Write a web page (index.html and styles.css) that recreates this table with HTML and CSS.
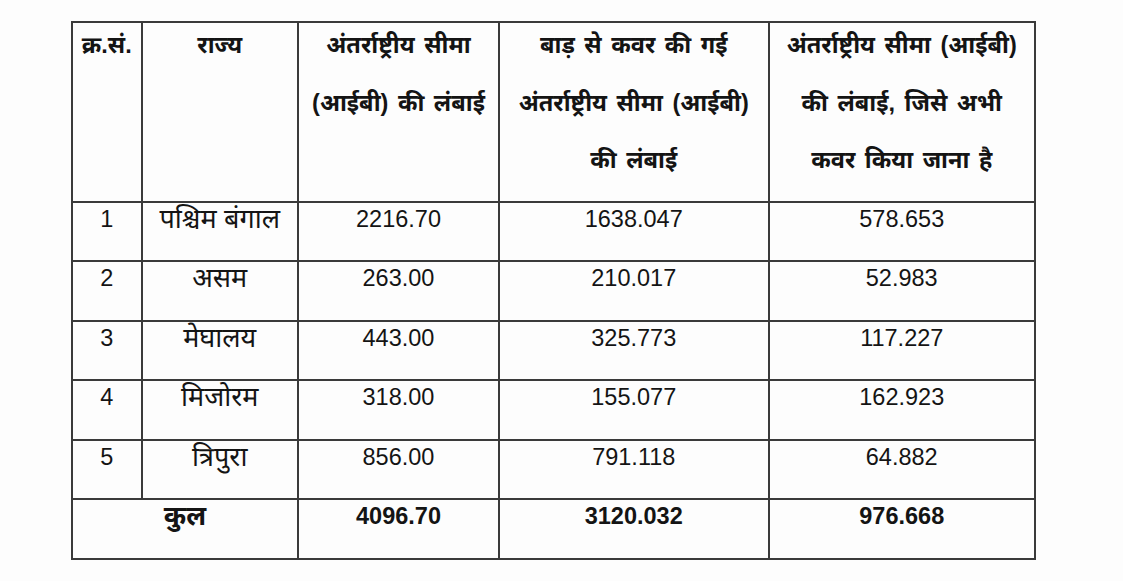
FILE: index.html
```html
<!DOCTYPE html>
<html lang="hi">
<head>
<meta charset="utf-8">
<title>अंतर्राष्ट्रीय सीमा</title>
<link rel="stylesheet" href="styles.css">
</head>
<body>
<table class="grid">
  <colgroup>
    <col class="c1"><col class="c2"><col class="c3"><col class="c4"><col class="c5">
  </colgroup>
  <thead>
    <tr class="head">
      <th><div class="ln">क्र.सं.</div></th>
      <th><div class="ln">राज्य</div></th>
      <th><div class="ln">अंतर्राष्ट्रीय सीमा</div><div class="ln">(आईबी) की लंबाई</div></th>
      <th><div class="ln">बाड़ से कवर की गई</div><div class="ln">अंतर्राष्ट्रीय सीमा (आईबी)</div><div class="ln">की लंबाई</div></th>
      <th><div class="ln">अंतर्राष्ट्रीय सीमा (आईबी)</div><div class="ln">की लंबाई, जिसे अभी</div><div class="ln">कवर किया जाना है</div></th>
    </tr>
  </thead>
  <tbody>
    <tr class="row"><td>1</td><td class="hi">पश्चिम बंगाल</td><td>2216.70</td><td>1638.047</td><td>578.653</td></tr>
    <tr class="row"><td>2</td><td class="hi">असम</td><td>263.00</td><td>210.017</td><td>52.983</td></tr>
    <tr class="row"><td>3</td><td class="hi">मेघालय</td><td>443.00</td><td>325.773</td><td>117.227</td></tr>
    <tr class="row"><td>4</td><td class="hi">मिजोरम</td><td>318.00</td><td>155.077</td><td>162.923</td></tr>
    <tr class="row"><td>5</td><td class="hi">त्रिपुरा</td><td>856.00</td><td>791.118</td><td>64.882</td></tr>
    <tr class="row total"><td colspan="2" class="hi">कुल</td><td>4096.70</td><td>3120.032</td><td>976.668</td></tr>
  </tbody>
</table>
</body>
</html>
```
FILE: styles.css
```css
html, body {
  margin: 0;
  padding: 0;
  background: #fdfdfd;
}
body {
  padding: 21px 0 0 71px;
  font-family: "Liberation Sans", "Noto Sans Devanagari", "Lohit Devanagari", "FreeSans", sans-serif;
  color: #141414;
}
.grid {
  border-collapse: collapse;
  table-layout: fixed;
  width: 963px;
}
.c1 { width: 69.5px; }
.c2 { width: 156.5px; }
.c3 { width: 201px; }
.c4 { width: 269.5px; }
.c5 { width: 266.5px; }
.grid th, .grid td {
  border: 2px solid #3a3a3a;
  text-align: center;
  vertical-align: top;
  padding: 0;
}
.head th {
  height: 166px;
  font-weight: bold;
  font-size: 23.5px;
  padding-top: 5px;
  word-spacing: 3px;
}
.ln {
  line-height: 34px;
  margin-bottom: 23.5px;
  white-space: nowrap;
}
.row td {
  height: 55.5px;
  font-size: 23.5px;
  line-height: 28px;
  padding-top: 2px;
}
.row td.hi {
  font-size: 27px;
}
.total td {
  font-weight: bold;
}
```
